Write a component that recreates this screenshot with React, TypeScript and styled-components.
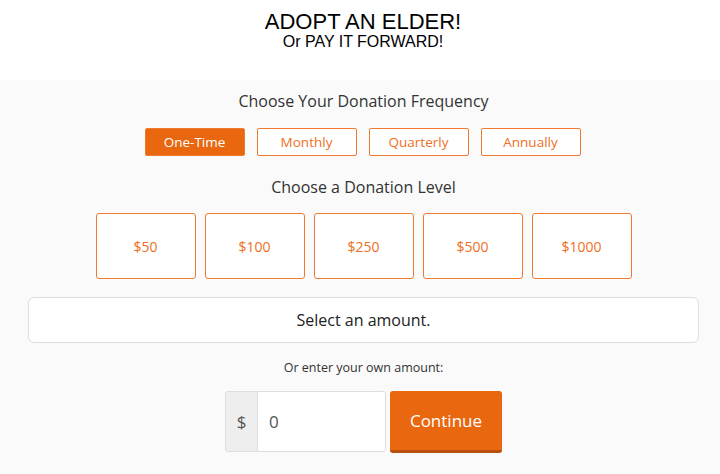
import React, { useState } from "react";
import styled, { createGlobalStyle } from "styled-components";

const GlobalStyle = createGlobalStyle`
  html, body {
    margin: 0;
    padding: 0;
    background: #fafafa;
    font-family: "Open Sans", "Noto Sans", sans-serif;
  }
`;

const Header = styled.header`
  background: #fff;
  height: 80px;
  display: flex;
  flex-direction: column;
  align-items: center;
  padding: 11px 0 0 6px;
  box-sizing: border-box;
  font-family: "Liberation Sans", Arial, sans-serif;
  color: #000;
`;

const Title = styled.h1`
  margin: 0;
  font-size: 22px;
  font-weight: 400;
  line-height: 22px;
`;

const SubTitle = styled.h2`
  margin: 0;
  font-size: 16px;
  font-weight: 400;
  line-height: 17px;
`;

const Main = styled.main`
  width: 671px;
  margin-left: 28px;
  display: flex;
  flex-direction: column;
  align-items: center;
  padding-top: 11px;
`;

const Label = styled.div`
  font-size: 16px;
  color: #333;
  line-height: 21px;
`;

const FreqRow = styled.div`
  display: flex;
  gap: 12px;
  margin-top: 16px;
  margin-left: -2px;
`;

const FreqButton = styled.button<{ $active?: boolean }>`
  width: 100px;
  height: 28px;
  border: 1px solid #ef7a30;
  border-radius: 2px;
  background: ${(p) => (p.$active ? "#e8670f" : "#fff")};
  color: ${(p) => (p.$active ? "#fff" : "#ee6f22")};
  font-family: inherit;
  font-size: 13.5px;
  padding: 0;
  cursor: pointer;
`;

const LevelLabel = styled(Label)`
  margin-top: 21px;
`;

const LevelRow = styled.div`
  display: flex;
  gap: 9px;
  margin-top: 15px;
`;

const LevelBox = styled.button`
  width: 100px;
  height: 66px;
  border: 1px solid #ef7a30;
  border-radius: 3px;
  background: #fff;
  color: #ee6f22;
  font-family: inherit;
  font-size: 14px;
  padding: 0;
  cursor: pointer;
`;

const Summary = styled.div`
  align-self: stretch;
  margin-top: 18px;
  height: 46px;
  background: #fff;
  border: 1px solid #ddd;
  border-radius: 6px;
  box-sizing: border-box;
  display: flex;
  align-items: center;
  justify-content: center;
  font-size: 16px;
  color: #222;
`;

const OwnLabel = styled.div`
  margin-top: 16px;
  font-size: 12.5px;
  color: #333;
`;

const EntryRow = styled.div`
  display: flex;
  gap: 4px;
  margin-top: 15px;
`;

const InputGroup = styled.div`
  display: flex;
  height: 61px;
  border: 1px solid #ddd;
  border-radius: 3px;
  overflow: hidden;
  box-sizing: border-box;
`;

const Addon = styled.span`
  width: 31px;
  background: #eee;
  border-right: 1px solid #ddd;
  display: flex;
  align-items: center;
  justify-content: center;
  font-size: 17px;
  color: #555;
`;

const AmountInput = styled.input`
  width: 127px;
  box-sizing: border-box;
  border: none;
  outline: none;
  padding: 0 0 0 11px;
  font-family: inherit;
  font-size: 17px;
  color: #555;
  background: #fff;
`;

const ContinueButton = styled.button`
  width: 112px;
  height: 62px;
  background: #e8670f;
  border: none;
  border-bottom: 3px solid #b84f0b;
  border-radius: 3px;
  color: #fff;
  font-family: inherit;
  font-size: 17px;
  padding: 0;
  cursor: pointer;
`;

const frequencies = ["One-Time", "Monthly", "Quarterly", "Annually"];
const levels = [50, 100, 250, 500, 1000];

export default function App() {
  const [freq, setFreq] = useState("One-Time");
  const [amount, setAmount] = useState("0");

  return (
    <>
      <GlobalStyle />
      <Header>
        <Title>ADOPT AN ELDER!</Title>
        <SubTitle>Or PAY IT FORWARD!</SubTitle>
      </Header>
      <Main>
        <Label>Choose Your Donation Frequency</Label>
        <FreqRow>
          {frequencies.map((f) => (
            <FreqButton key={f} $active={f === freq} onClick={() => setFreq(f)}>
              {f}
            </FreqButton>
          ))}
        </FreqRow>
        <LevelLabel>Choose a Donation Level</LevelLabel>
        <LevelRow>
          {levels.map((l) => (
            <LevelBox key={l} onClick={() => setAmount(String(l))}>
              ${l}
            </LevelBox>
          ))}
        </LevelRow>
        <Summary>Select an amount.</Summary>
        <OwnLabel>Or enter your own amount:</OwnLabel>
        <EntryRow>
          <InputGroup>
            <Addon>$</Addon>
            <AmountInput value={amount} onChange={(e) => setAmount(e.target.value)} />
          </InputGroup>
          <ContinueButton>Continue</ContinueButton>
        </EntryRow>
      </Main>
    </>
  );
}
